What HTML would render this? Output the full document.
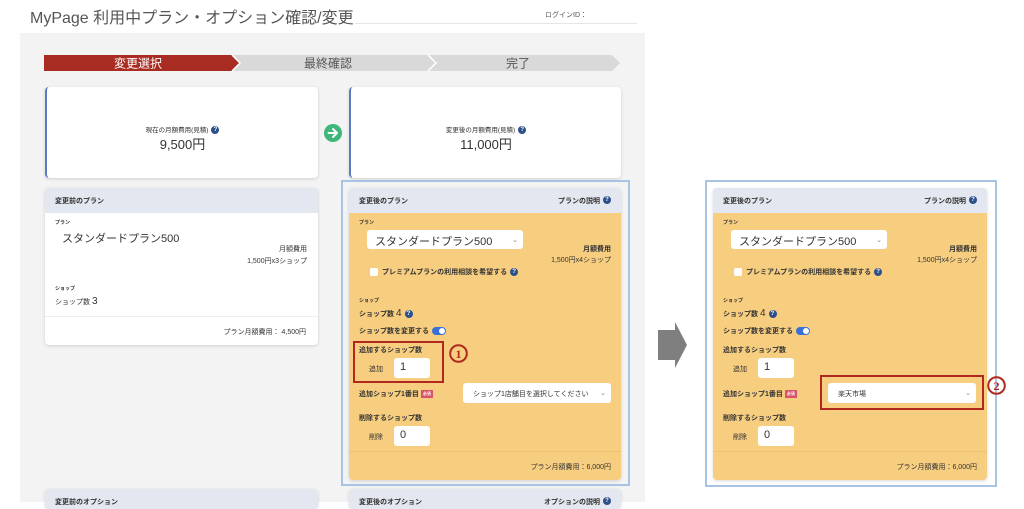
<!DOCTYPE html>
<html><head><meta charset="utf-8"><style>
*{margin:0;padding:0;box-sizing:border-box}
body{width:1024px;height:502px;background:#fff;position:relative;overflow:hidden;font-family:"Liberation Sans","Noto Sans CJK JP",sans-serif;color:#333}
.a{position:absolute;white-space:nowrap}
.card{position:absolute;background:#fff;border-radius:4px;box-shadow:0 1px 3px rgba(0,0,0,.15);overflow:hidden}
.hd{position:absolute;left:0;top:0;right:0;height:25px;background:#e3e7ef;font-size:7px;font-weight:bold;padding:8px 10px;color:#333}
.hd span{float:right}
.q{display:inline-block;width:8px;height:8px;border-radius:50%;background:#2d4f8a;color:#fff;font-size:6px;line-height:8px;text-align:center;vertical-align:middle;font-weight:bold;margin-left:3px}
.body{position:absolute;left:0;top:25px;right:0;bottom:0;background:#f7ce80}
.t6{font-size:6px;font-weight:bold}
.t7{font-size:7px}
.sel{position:absolute;background:#fff;border-radius:3px}
.sel i{position:absolute;right:5px;top:50%;margin-top:-4px;font-style:normal;font-size:7px;color:#888}
.inp{position:absolute;background:#fff;border-radius:3px;font-size:11px;padding:3px 6px}
.tog{display:inline-block;width:14px;height:8px;border-radius:4px;background:#3a6fd8;vertical-align:middle;position:relative;margin-left:3px}
.tog:after{content:"";position:absolute;right:1px;top:1px;width:6px;height:6px;border-radius:50%;background:#fff}
.req{display:inline-block;background:#d9536a;color:#fff;font-size:4px;padding:1px 2px;vertical-align:middle;margin-left:2px}
</style></head><body>

<div class="a" style="left:30px;top:4px;font-size:16px;color:#555">MyPage 利用中プラン・オプション確認/変更</div>
<div class="a" style="left:545px;top:10px;font-size:7px;color:#555">ログインID：</div>
<div class="a" style="left:355px;top:23px;width:282px;height:1px;background:#e5e5e5"></div>

<div class="a" style="left:20px;top:33px;width:625px;height:469px;background:#f3f3f3"></div>

<svg class="a" style="left:44px;top:55px" width="576" height="16">
<polygon points="0,0 188,0 196,8 188,16 0,16" fill="#a92c22"/>
<polygon points="188,0 384,0 392,8 384,16 188,16 196,8" fill="#d9d9d9"/>
<polygon points="384,0 568,0 576,8 568,16 384,16 392,8" fill="#d9d9d9"/>
<polyline points="188,0 196,8 188,16" fill="none" stroke="#fff" stroke-width="1.5"/>
<polyline points="384,0 392,8 384,16" fill="none" stroke="#fff" stroke-width="1.5"/>
<text x="94" y="12.5" font-size="12" fill="#fff" text-anchor="middle" font-family="Liberation Sans,Noto Sans CJK JP,sans-serif">変更選択</text>
<text x="284" y="12.5" font-size="12" fill="#555" text-anchor="middle" font-family="Liberation Sans,Noto Sans CJK JP,sans-serif">最終確認</text>
<text x="474" y="12.5" font-size="12" fill="#555" text-anchor="middle" font-family="Liberation Sans,Noto Sans CJK JP,sans-serif">完了</text>
</svg>

<div class="card" style="left:45px;top:87px;width:273px;height:91px;border-left:2px solid #5a7cc4">
<div class="a t7" style="left:0;right:0;top:37px;text-align:center;font-size:6.5px">現在の月額費用(見積)<span class="q">?</span></div>
<div class="a" style="left:0;right:0;top:47px;text-align:center;font-size:13px">9,500円</div>
</div>
<svg class="a" style="left:324px;top:124px" width="18" height="18"><circle cx="9" cy="9" r="9" fill="#3fb67b"/><path d="M4.5 9h8M9 5l4 4-4 4" stroke="#fff" stroke-width="2" fill="none" stroke-linecap="round" stroke-linejoin="round"/></svg>
<div class="card" style="left:349px;top:87px;width:272px;height:91px;border-left:2px solid #5a7cc4">
<div class="a t7" style="left:0;right:0;top:37px;text-align:center;font-size:6.5px">変更後の月額費用(見積)<span class="q">?</span></div>
<div class="a" style="left:0;right:0;top:47px;text-align:center;font-size:13px">11,000円</div>
</div>

<div class="card" style="left:45px;top:188px;width:273px;height:157px">
<div class="hd">変更前のプラン</div>
<div class="a t6" style="left:10px;top:31px;font-size:5px">プラン</div>
<div class="a" style="left:17px;top:42px;font-size:11px">スタンダードプラン500</div>
<div class="a t7" style="right:11px;top:56px">月額費用</div>
<div class="a t7" style="right:11px;top:68px">1,500円x3ショップ</div>
<div class="a t6" style="left:10px;top:97px;font-size:5px">ショップ</div>
<div class="a t7" style="left:10px;top:108px">ショップ数 <span style="font-size:10px">3</span></div>
<div class="a" style="left:0;right:0;top:128px;height:1px;background:#eee"></div>
<div class="a t7" style="right:12px;top:139px">プラン月額費用： 4,500円</div>
</div>

<div class="card" style="left:45px;top:489px;width:273px;height:20px"><div class="hd">変更前のオプション</div></div>
<div class="card" style="left:349px;top:489px;width:272px;height:20px"><div class="hd">変更後のオプション<span>オプションの説明<span class="q">?</span></span></div></div>

<div class="a" style="left:341px;top:180px;width:289px;height:306px;border:2px solid #a9c3e2"></div>
<div class="card" style="left:349px;top:188px;width:272px;height:292px">
<div class="hd">変更後のプラン<span>プランの説明<span class="q">?</span></span></div>
<div class="body"></div>
<div class="a t6" style="left:10px;top:31px;font-size:5px">プラン</div>
<div class="sel" style="left:18px;top:42px;width:156px;height:19px"><div class="a" style="left:8px;top:3px;font-size:11px">スタンダードプラン500</div><i>⌄</i></div>
<div class="a t7" style="right:10px;top:56px;font-weight:bold">月額費用</div>
<div class="a t7" style="right:10px;top:67px">1,500円x4ショップ</div>
<div class="a" style="left:21px;top:80px;width:8px;height:8px;background:#fff;border-radius:2px"></div>
<div class="a t7" style="left:33px;top:79px;font-weight:bold">プレミアムプランの利用相談を希望する<span class="q">?</span></div>
<div class="a t6" style="left:10px;top:109px;font-size:5px">ショップ</div>
<div class="a t7" style="left:10px;top:120px;font-weight:bold">ショップ数 <span style="font-size:10px;font-weight:normal">4</span><span class="q">?</span></div>
<div class="a t7" style="left:10px;top:138px;font-weight:bold">ショップ数を変更する<span class="tog"></span></div>
<div class="a t7" style="left:10px;top:157px;font-weight:bold">追加するショップ数</div>
<div class="a" style="left:4px;top:153px;width:91px;height:42px;border:2px solid #b0281e"></div>
<svg class="a" style="left:100px;top:156px" width="19" height="19"><circle cx="9.5" cy="9.5" r="8.3" fill="none" stroke="#b0281e" stroke-width="2"/><text x="9.5" y="14" font-size="12" font-weight="bold" fill="#b0281e" text-anchor="middle" font-family="Liberation Serif,serif">1</text></svg>
<div class="a t7" style="left:20px;top:176px">追加</div>
<div class="inp" style="left:45px;top:170px;width:36px;height:20px">1</div>
<div class="a t7" style="left:10px;top:201px;font-weight:bold">追加ショップ1番目<span class="req">必須</span></div>
<div class="sel" style="left:114px;top:195px;width:148px;height:20px"><div class="a t7" style="left:10px;top:6px">ショップ1店舗目を選択してください</div><i>⌄</i></div>
<div class="a t7" style="left:10px;top:225px;font-weight:bold">削除するショップ数</div>
<div class="a t7" style="left:20px;top:244px">削除</div>
<div class="inp" style="left:45px;top:238px;width:36px;height:20px">0</div>
<div class="a" style="left:0;right:0;top:263px;height:1px;background:#f0c36e"></div>
<div class="a t7" style="right:10px;top:274px">プラン月額費用：6,000円</div>
</div>

<svg class="a" style="left:656px;top:322px" width="32" height="46"><polygon points="2,8 19,8 19,0 31,23 19,46 19,38 2,38" fill="#7f7f7f"/></svg>

<div class="a" style="left:705px;top:180px;width:292px;height:307px;border:2px solid #a9c3e2"></div>
<div class="card" style="left:713px;top:188px;width:274px;height:292px">
<div class="hd">変更後のプラン<span>プランの説明<span class="q">?</span></span></div>
<div class="body"></div>
<div class="a t6" style="left:10px;top:31px;font-size:5px">プラン</div>
<div class="sel" style="left:18px;top:42px;width:156px;height:19px"><div class="a" style="left:8px;top:3px;font-size:11px">スタンダードプラン500</div><i>⌄</i></div>
<div class="a t7" style="right:10px;top:56px;font-weight:bold">月額費用</div>
<div class="a t7" style="right:10px;top:67px">1,500円x4ショップ</div>
<div class="a" style="left:21px;top:80px;width:8px;height:8px;background:#fff;border-radius:2px"></div>
<div class="a t7" style="left:33px;top:79px;font-weight:bold">プレミアムプランの利用相談を希望する<span class="q">?</span></div>
<div class="a t6" style="left:10px;top:109px;font-size:5px">ショップ</div>
<div class="a t7" style="left:10px;top:120px;font-weight:bold">ショップ数 <span style="font-size:10px;font-weight:normal">4</span><span class="q">?</span></div>
<div class="a t7" style="left:10px;top:138px;font-weight:bold">ショップ数を変更する<span class="tog"></span></div>
<div class="a t7" style="left:10px;top:157px;font-weight:bold">追加するショップ数</div>
<div class="a t7" style="left:20px;top:176px">追加</div>
<div class="inp" style="left:45px;top:170px;width:36px;height:20px">1</div>
<div class="a t7" style="left:10px;top:201px;font-weight:bold">追加ショップ1番目<span class="req">必須</span></div>
<div class="a" style="left:107px;top:187px;width:164px;height:35px;border:2px solid #b0281e"></div>
<div class="sel" style="left:115px;top:195px;width:148px;height:20px"><div class="a t7" style="left:10px;top:6px">楽天市場</div><i>⌄</i></div>
<div class="a t7" style="left:10px;top:225px;font-weight:bold">削除するショップ数</div>
<div class="a t7" style="left:20px;top:244px">削除</div>
<div class="inp" style="left:45px;top:238px;width:36px;height:20px">0</div>
<div class="a" style="left:0;right:0;top:263px;height:1px;background:#f0c36e"></div>
<div class="a t7" style="right:10px;top:274px">プラン月額費用：6,000円</div>
</div>
<svg class="a" style="left:987px;top:376px" width="19" height="19"><circle cx="9.5" cy="9.5" r="8.3" fill="none" stroke="#b0281e" stroke-width="2"/><text x="9.5" y="14" font-size="12" font-weight="bold" fill="#b0281e" text-anchor="middle" font-family="Liberation Serif,serif">2</text></svg>

</body></html>
